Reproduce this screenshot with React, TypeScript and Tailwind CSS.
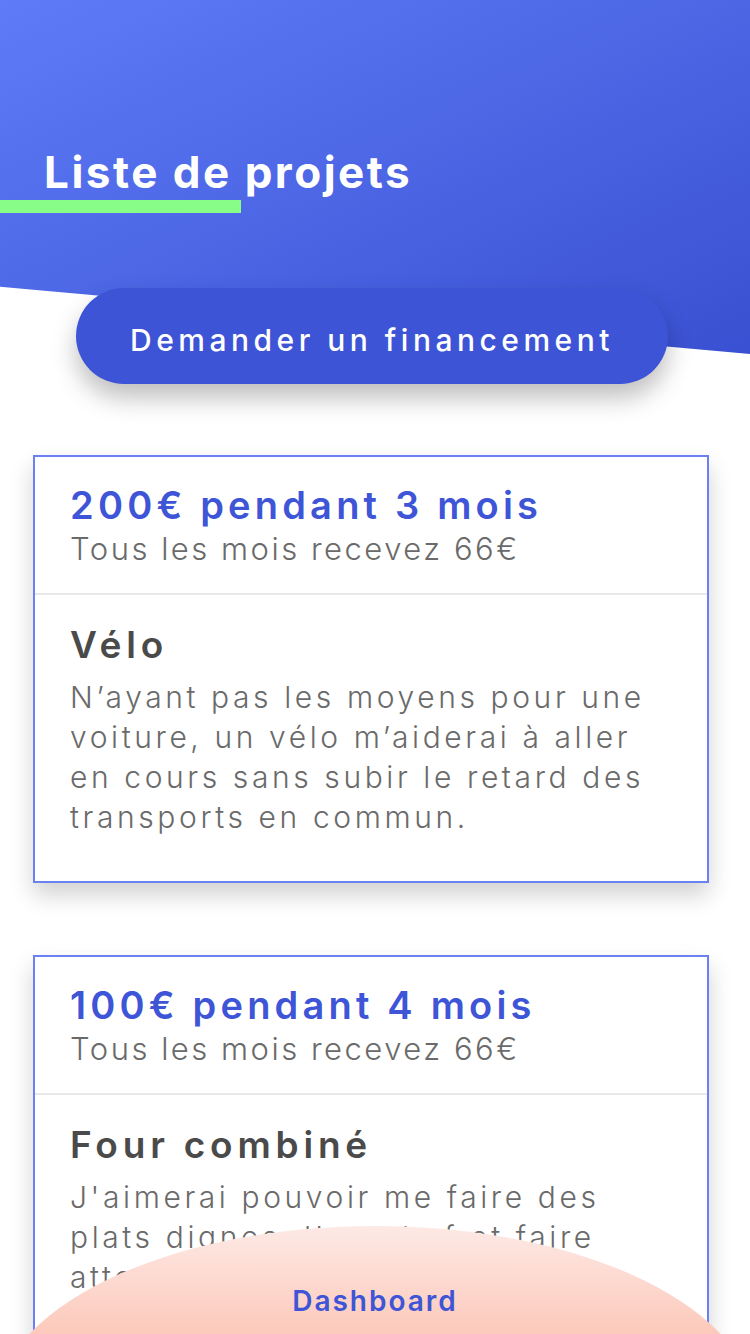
import React from 'react';

const projects = [
    {
        amount: '200€ pendant 3 mois',
        monthly: 'Tous les mois recevez 66€',
        title: 'Vélo',
        text: 'N’ayant pas les moyens pour une voiture, un vélo m’aiderai à aller en cours sans subir le retard des transports en commun.',
    },
    {
        amount: '100€ pendant 4 mois',
        monthly: 'Tous les mois recevez 66€',
        title: 'Four combiné',
        text: "J'aimerai pouvoir me faire des plats dignes d'un chef et faire attention à ma santé.",
    },
];

const ProjectCard = ({ p }: { p: (typeof projects)[number] }) => (
    <div className="ml-[33px] w-[676px] border-2 border-[#6b80f3] bg-white shadow-[0_12px_22px_rgba(0,0,0,0.18)]">
        <div className="h-[136px] pl-[35px] pt-[24px]">
            <div className="text-[38px] leading-[48px] font-semibold tracking-[4.2px] text-[#3d55d6]">{p.amount}</div>
            <div className="text-[31px] leading-[40px] font-light tracking-[2.5px] text-[#6a6a6a]">{p.monthly}</div>
        </div>
        <div className="h-[2px] bg-[#e8e8e8]" />
        <div className="pl-[35px] pr-[30px] pt-[26px] pb-[44px]">
            <div className="text-[37px] leading-[48px] font-semibold tracking-[4.8px] text-[#4a4a4a]">{p.title}</div>
            <p className="mt-[8px] text-[30px] leading-[40px] font-light tracking-[3.6px] text-[#6a6a6a]">{p.text}</p>
        </div>
    </div>
);

export default function App() {
    return (
        <div className="relative h-[1334px] overflow-hidden bg-white" style={{ fontFamily: 'Inter, "Open Sans", sans-serif' }}>
            {/* header */}
            <div className="h-[354px] bg-linear-to-br from-[#5f7bf7] to-[#3a50d2] [clip-path:polygon(0_0,100%_0,100%_100%,0_81%)]">
                <div className="pt-[146px]">
                    <h1 className="pl-[44px] text-[44px] leading-[52px] font-bold tracking-[2.5px] text-white">Liste de projets</h1>
                    <div className="mt-[2px] h-[13px] w-[241px] bg-[#88fd88]" />
                </div>
            </div>

            <button className="relative z-10 -mt-[66px] ml-[76px] flex h-[96px] w-[592px] items-center justify-center rounded-full bg-[#3d54d6] pt-[8px] text-[30px] font-medium tracking-[4.5px] text-white shadow-[0_14px_24px_rgba(0,0,0,0.25)]">
                Demander un financement
            </button>

            <div className="mt-[71px] flex flex-col gap-[72px]">
                {projects.map((p) => (
                    <ProjectCard key={p.amount} p={p} />
                ))}
            </div>

            {/* bottom nav */}
            <div className="absolute left-[-5px] top-[1226px] z-20 h-[370px] w-[760px] rounded-[50%] bg-linear-to-b from-[#fde9e5] to-[#fcc8ba] to-30%">
                <div className="pt-[54px] text-center text-[28px] font-semibold tracking-[2px] text-[#3d55d6]">Dashboard</div>
            </div>
        </div>
    );
}
